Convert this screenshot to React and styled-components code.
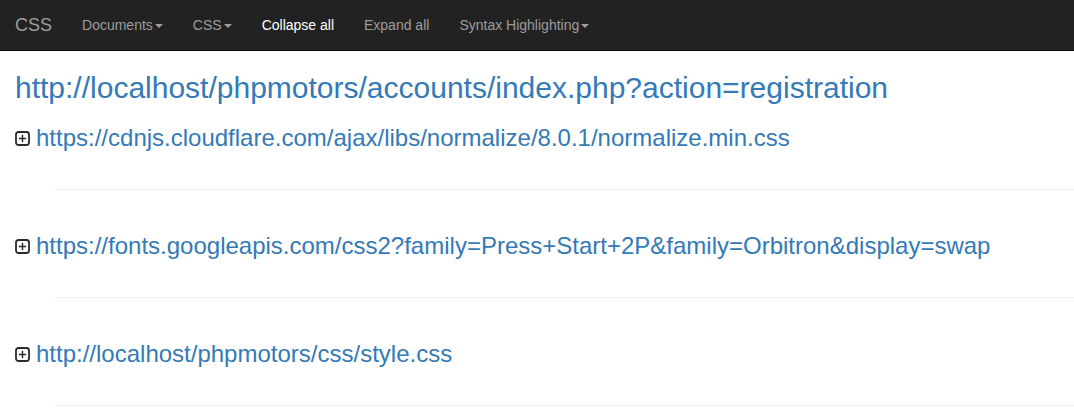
import React from 'react';
import styled, { createGlobalStyle } from 'styled-components';

const GlobalStyle = createGlobalStyle`
  body {
    margin: 0;
    font-family: "Liberation Sans", Arial, sans-serif;
    font-size: 14px;
    color: #333;
    background: #fff;
  }
`;

const Navbar = styled.nav`
  display: flex;
  align-items: center;
  height: 50px;
  background: #222;
  border-bottom: 1px solid #080808;
`;

const Brand = styled.a`
  padding: 0 15px;
  font-size: 18px;
  line-height: 50px;
  color: #9d9d9d;
`;

const NavItem = styled.a`
  padding: 0 15px;
  line-height: 50px;
  font-size: 14px;
  color: ${(p) => (p.active ? '#fff' : '#9d9d9d')};
`;

const Caret = styled.span`
  display: inline-block;
  width: 0;
  height: 0;
  margin-left: 2px;
  vertical-align: middle;
  border-top: 4px solid;
  border-right: 4px solid transparent;
  border-left: 4px solid transparent;
`;

const Main = styled.main`
  padding: 0 15px;
`;

const Title = styled.h2`
  margin: 20px 0 10px;
  font-size: 30px;
  font-weight: 400;
  line-height: 1.1;
  color: #337ab7;
`;

const Row = styled.div`
  display: flex;
  align-items: center;
  gap: 6px;
`;

const Link = styled.a`
  font-size: 24px;
  color: #337ab7;
  text-decoration: none;
`;

const Spacer = styled.div`
  height: 37px;
`;

const Rule = styled.hr`
  margin: 0 -15px 0 40px;
  border: 0;
  border-top: 1px solid #eee;
`;

const Section = styled.section`
  padding-top: 10px;
  & + & {
    padding-top: 42px;
  }
`;

function PlusBox() {
  return (
    <svg width="15" height="15" viewBox="0 0 15 15">
      <rect x="1" y="1" width="13" height="13" rx="2.5" fill="#fff" stroke="#2a2a2a" strokeWidth="1.8" />
      <path d="M7.5 3.8v7.4M3.8 7.5h7.4" stroke="#2a2a2a" strokeWidth="1.4" />
    </svg>
  );
}

const links = [
  'https://cdnjs.cloudflare.com/ajax/libs/normalize/8.0.1/normalize.min.css',
  'https://fonts.googleapis.com/css2?family=Press+Start+2P&family=Orbitron&display=swap',
  'http://localhost/phpmotors/css/style.css',
];

export default function App() {
  return (
    <>
      <GlobalStyle />
      <Navbar>
        <Brand>CSS</Brand>
        <NavItem>Documents<Caret /></NavItem>
        <NavItem>CSS<Caret /></NavItem>
        <NavItem active>Collapse all</NavItem>
        <NavItem>Expand all</NavItem>
        <NavItem>Syntax Highlighting<Caret /></NavItem>
      </Navbar>
      <Main>
        <Title>http://localhost/phpmotors/accounts/index.php?action=registration</Title>
        {links.map((l) => (
          <Section key={l}>
            <Row>
              <PlusBox />
              <Link>{l}</Link>
            </Row>
            <Spacer />
            <Rule />
          </Section>
        ))}
      </Main>
    </>
  );
}
